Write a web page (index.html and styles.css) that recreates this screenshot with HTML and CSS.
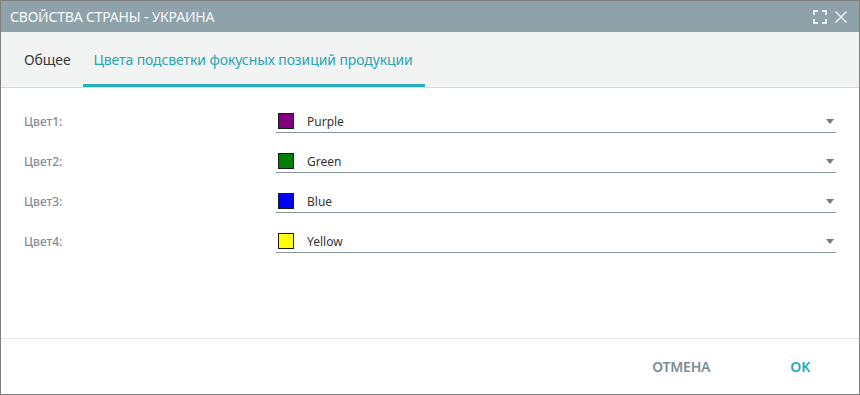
FILE: index.html
```html
<!DOCTYPE html>
<html lang="ru">
<head>
<meta charset="utf-8">
<title>Свойства страны - Украина</title>
<link rel="stylesheet" href="styles.css">
</head>
<body>
<div class="dialog">
  <div class="titlebar">
    <span class="title">СВОЙСТВА СТРАНЫ - УКРАИНА</span>
    <div class="title-actions">
      <svg class="ticon" width="14" height="14" viewBox="0 0 14 14" fill="none" stroke="currentColor" stroke-width="2">
        <path d="M1 5V1H5M9 1H13V5M13 9V13H9M5 13H1V9"/>
      </svg>
      <svg class="ticon" width="14" height="14" viewBox="0 0 14 14" fill="none" stroke="currentColor" stroke-width="1.6">
        <path d="M1.5 1.5L12.5 12.5M12.5 1.5L1.5 12.5"/>
      </svg>
    </div>
  </div>
  <div class="tabs">
    <div class="tab">Общее</div>
    <div class="tab active">Цвета подсветки фокусных позиций продукции</div>
  </div>
  <div class="content">
    <div class="row">
      <label class="label">Цвет1:</label>
      <div class="field"><span class="swatch purple"></span><span class="value">Purple</span><span class="arrow"></span></div>
    </div>
    <div class="row">
      <label class="label">Цвет2:</label>
      <div class="field"><span class="swatch green"></span><span class="value">Green</span><span class="arrow"></span></div>
    </div>
    <div class="row">
      <label class="label">Цвет3:</label>
      <div class="field"><span class="swatch blue"></span><span class="value">Blue</span><span class="arrow"></span></div>
    </div>
    <div class="row">
      <label class="label">Цвет4:</label>
      <div class="field"><span class="swatch yellow"></span><span class="value">Yellow</span><span class="arrow"></span></div>
    </div>
  </div>
  <div class="footer">
    <button class="btn cancel">ОТМЕНА</button>
    <button class="btn ok">OK</button>
  </div>
</div>
</body>
</html>
```

FILE: styles.css
```css
* { box-sizing: border-box; }
html, body { margin: 0; padding: 0; background: #ffffff; }
body { font-family: "Noto Sans", "Open Sans", sans-serif; }

.dialog {
  width: 860px;
  height: 395px;
  border: 1px solid #7f7f7f;
  display: flex;
  flex-direction: column;
  background: #fff;
}

.titlebar {
  height: 31px;
  background: #8fa2aa;
  color: #f7f9fa;
  display: flex;
  align-items: center;
  justify-content: space-between;
  padding: 0 11px 0 9px;
}
.title { font-size: 14px; letter-spacing: -0.2px; }
.title-actions { display: flex; gap: 7px; align-items: center; color: #e9eff1; }
.ticon { display: block; }

.tabs {
  height: 56px;
  background: #f2f3f3;
  border-bottom: 1px solid #d6d8d9;
  display: flex;
  padding-left: 11px;
}
.tab {
  font-size: 14px;
  line-height: 18px;
  padding: 19px 12px 0;
  color: #3a3a3a;
  border-bottom: 3px solid transparent;
  letter-spacing: -0.1px;
}
.tab.active { color: #2aa4b0; border-bottom-color: #2ab0ba; padding-left: 11px; }

.content {
  flex: 1;
  padding: 22px 23px 0;
  display: flex;
  flex-direction: column;
  gap: 17px;
}
.row {
  display: grid;
  grid-template-columns: 252px 1fr;
  align-items: center;
  height: 23px;
}
.label { font-size: 12px; color: #868c91; font-weight: 500; }
.field {
  height: 23px;
  border-bottom: 1px solid #87939a;
  display: flex;
  align-items: center;
  padding: 0 2px 0 2px;
}
.swatch {
  width: 16px;
  height: 16px;
  border: 1px solid #1a1a1a;
  margin-right: 13px;
}
.purple { background: #800080; }
.green { background: #008000; }
.blue { background: #0000ff; }
.yellow { background: #ffff00; }
.value { font-size: 12px; color: #333; flex: 1; }
.arrow {
  width: 0; height: 0;
  border-left: 4px solid transparent;
  border-right: 4px solid transparent;
  border-top: 5px solid #6f7c83;
}

.footer {
  height: 56px;
  border-top: 1px solid #e4e6e7;
  display: flex;
  justify-content: flex-end;
  align-items: center;
  padding: 0 33px 0 0;
  gap: 48px;
}
.btn {
  background: none;
  border: none;
  font-family: inherit;
  font-size: 14px;
  font-weight: 600;
  padding: 0 16px;
  letter-spacing: -0.2px;
}
.cancel { color: #7c8c93; }
.ok { color: #27a9b5; }
```
